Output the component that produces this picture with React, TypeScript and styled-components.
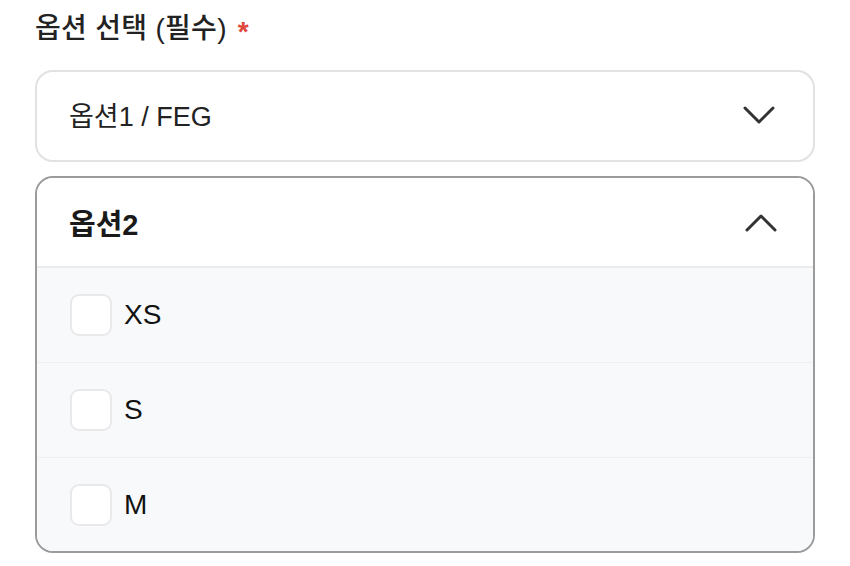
import React from "react";
import styled, { createGlobalStyle } from "styled-components";

const Global = createGlobalStyle`
  html, body { margin: 0; padding: 0; background: #fff; }
  body { font-family: "Liberation Sans", "Noto Sans CJK KR", sans-serif; color: #1a1a1a; }
`;

const Page = styled.div`
  padding: 10px 35px 0 35px;
  width: 780px;
`;

const Label = styled.div`
  font-size: 28px;
  line-height: 38px;
  font-weight: 500;
  color: #222;
  margin-bottom: 22px;
  display: flex;
  align-items: center;
  gap: 11px;
  letter-spacing: 0.3px;
`;

const Star = styled.span`
  color: #e0473c;
  font-size: 28px;
  font-weight: 700;
  position: relative;
  top: 3px;
`;

const SelectBox = styled.div`
  box-sizing: border-box;
  height: 92px;
  border: 2px solid #e2e2e2;
  border-radius: 18px;
  display: flex;
  align-items: center;
  justify-content: space-between;
  padding: 0 38px 0 32px;
  margin-bottom: 14px;
`;

const Value = styled.span`
  font-size: 27px;
  color: #222;
  position: relative;
  top: -2px;
`;

const Panel = styled.div`
  box-sizing: border-box;
  border: 2px solid #9b9b9b;
  border-radius: 18px;
  overflow: hidden;
`;

const PanelHeader = styled.div`
  height: 88px;
  display: flex;
  align-items: center;
  justify-content: space-between;
  padding: 0 36px 0 32px;
  background: #fff;
  border-bottom: 2px solid #ececef;
`;

const HeaderTitle = styled.span`
  font-size: 29px;
  font-weight: 700;
  color: #1a1a1a;
`;

const List = styled.div`
  background: #f8f9fb;
`;

const Row = styled.label<{ last?: boolean }>`
  box-sizing: border-box;
  height: ${(p) => (p.last ? "93px" : "95px")};
  display: flex;
  align-items: center;
  gap: 12px;
  padding-left: 33px;
  border-bottom: ${(p) => (p.last ? "none" : "1px solid #eeeff2")};
`;

const Box = styled.span`
  box-sizing: border-box;
  width: 42px;
  height: 42px;
  border: 2px solid #e9e9ec;
  border-radius: 9px;
  background: #fff;
`;

const OptionText = styled.span`
  font-size: 28px;
  color: #111;
`;

const Chevron = ({ up }: { up?: boolean }) => (
  <svg width="32" height="20" viewBox="0 0 32 20" fill="none">
    <polyline
      points={up ? "2,18 16,4 30,18" : "2,2 16,16 30,2"}
      stroke="#333"
      strokeWidth="3"
      strokeLinecap="round"
      strokeLinejoin="round"
    />
  </svg>
);

export default function App() {
  const options = ["XS", "S", "M"];
  return (
    <>
      <Global />
      <Page>
        <Label>
          옵션 선택 (필수) <Star>*</Star>
        </Label>
        <SelectBox>
          <Value>옵션1 / FEG</Value>
          <Chevron />
        </SelectBox>
        <Panel>
          <PanelHeader>
            <HeaderTitle>옵션2</HeaderTitle>
            <Chevron up />
          </PanelHeader>
          <List>
            {options.map((o, i) => (
              <Row key={o} last={i === options.length - 1}>
                <Box />
                <OptionText>{o}</OptionText>
              </Row>
            ))}
          </List>
        </Panel>
      </Page>
    </>
  );
}
